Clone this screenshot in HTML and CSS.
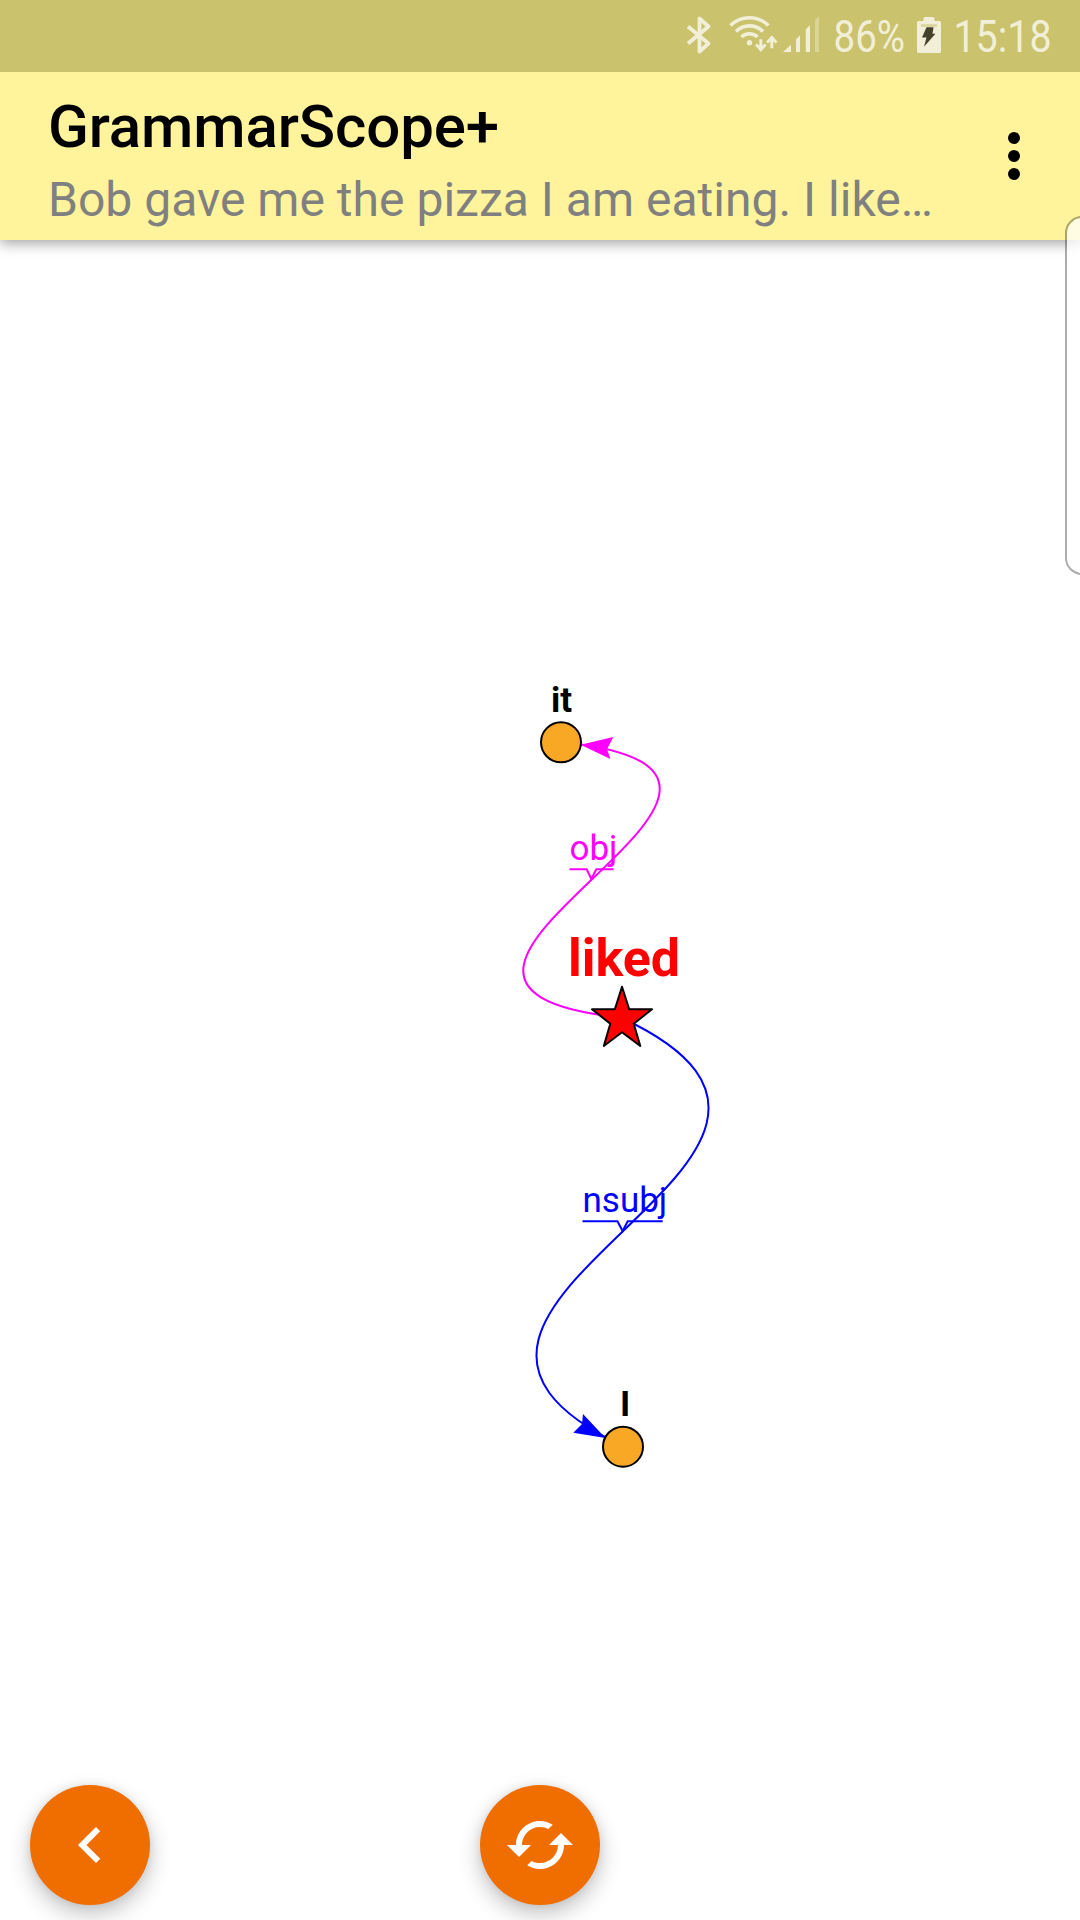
FILE: index.html
```html
<!DOCTYPE html>
<html lang="en">
<head>
<meta charset="utf-8">
<title>GrammarScope+</title>
<link rel="stylesheet" href="styles.css">
</head>
<body>
<div class="screen">
  <div class="status-bar">
    <svg class="status-icon" width="40" height="72" viewBox="680 0 40 72">
      <path class="line" d="M688 26.500 L708.500 43.500 L699.500 51.500 V18.500 L708.500 26.500 L688 43.500" stroke-width="3.800"/>
    </svg>
    <svg class="status-icon" width="60" height="72" viewBox="720 0 60 72">
      <g class="line" stroke-width="3.600">
        <path d="M730.500 25.500 A27 27 0 0 1 768.500 25.500"/>
        <path d="M736 31.500 A19 19 0 0 1 763 31.500"/>
        <path d="M741.500 37 A11.500 11.500 0 0 1 757.500 37"/>
      </g>
      <circle cx="749.500" cy="42.700" r="2.700"/>
      <path d="M759.300 39.300h3v6.500l2.400-2.400 1.900 1.900-5.800 6.800-5.800-6.800 1.900-1.900 2.400 2.400zM770.300 48.200h3v-7l2.300 2.400 1.900-1.900-5.700-6.400-5.700 6.400 1.900 1.900 2.300-2.400z"/>
    </svg>
    <svg class="status-icon" width="45" height="72" viewBox="780 0 45 72">
      <path d="M783 52l8-7.300V52zM796 52V39.300l4-3.700V52zM805.800 52V29.300l4.200-4V52z"/>
      <path class="faint" d="M815 52V20l4-4v36z"/>
    </svg>
    <svg class="status-icon" width="85" height="72" viewBox="825 0 85 72">
      <text class="status-text" x="833.500" y="52" textLength="71.500" lengthAdjust="spacingAndGlyphs">86%</text>
    </svg>
    <svg class="status-icon" width="40" height="72" viewBox="910 0 40 72">
      <path d="M923.500 21v-2.500q0-1.500 1.500-1.500h8q1.500 0 1.500 1.500V21h5q1.500 0 1.500 1.500v29q0 1.500-1.500 1.500h-21q-1.500 0-1.500-1.500v-29q0-1.500 1.500-1.500z"/>
      <path class="battery-level" d="M921 24.300h16v2.500h-16z"/>
      <path class="bolt" d="M926.500 27.300h7l-1 6.500h3l-11.500 13 2.500-9.300H922z"/>
    </svg>
    <svg class="status-icon" width="130" height="72" viewBox="950 0 130 72">
      <text class="status-text" x="953.500" y="52" textLength="98" lengthAdjust="spacingAndGlyphs">15:18</text>
    </svg>
  </div>

  <header class="app-bar">
    <div class="titles">
      <h1 class="title">GrammarScope+</h1>
      <p class="subtitle">Bob gave me the pizza I am eating. I like…</p>
    </div>
    <div class="overflow">
      <span class="dot"></span><span class="dot"></span><span class="dot"></span>
    </div>
  </header>

  <main class="content">
    <svg class="graph" width="1080" height="1680" viewBox="0 240 1080 1680">
      <g class="edge obj">
        <path d="M622 1017.500 C306.500 985.500 876.500 774 561 742"/>
        <path d="M569.500 869.300H586.700L591.300 879L596.300 869.300H613.500"/>
        <path class="head" d="M580.500 744.700L613.300 737L607 749.300L610.500 759z"/>
        <text x="569.500" y="859.500">obj</text>
      </g>
      <g class="edge nsubj">
        <path d="M622 1018 C921.500 1158.500 323.500 1304.500 623 1446"/>
        <path d="M582.500 1221.300H617.500L622.600 1231L627.700 1221.300H662.700"/>
        <path class="head" d="M605.500 1438L583 1414L582 1424L573.300 1432.700z"/>
        <text x="582.500" y="1212.300">nsubj</text>
      </g>
      <circle class="node" cx="561" cy="742.300" r="20"/>
      <circle class="node" cx="623" cy="1446.700" r="20"/>
      <path class="star" d="M622 986.700L629.200 1009.300H652L633.700 1023.700L640.300 1046L622 1032.300L603.800 1046L610.300 1023.700L592 1009.300H614.900z"/>
      <text class="word" x="561.500" y="712">it</text>
      <text class="word" x="625" y="1415.700">I</text>
      <text class="word root" x="624" y="976">liked</text>
    </svg>

    <button class="fab back" aria-label="Back">
      <svg width="72" height="72" viewBox="0 0 24 24"><path d="M15.410 7.410L14 6l-6 6 6 6 1.410-1.410L10.830 12z"/></svg>
    </button>
    <button class="fab reload" aria-label="Reload">
      <svg width="72" height="72" viewBox="0 0 24 24"><path d="M19 8l-4 4h3c0 3.310-2.690 6-6 6-1.010 0-1.970-.25-2.800-.7l-1.460 1.460C8.970 19.540 10.430 20 12 20c4.420 0 8-3.580 8-8h3l-4-4zM6 12c0-3.310 2.690-6 6-6 1.010 0 1.970.25 2.800.7l1.460-1.460C15.030 4.460 13.570 4 12 4c-4.420 0-8 3.580-8 8H1l4 4 4-4H6z"/></svg>
    </button>
  </main>

  <div class="edge-handle"></div>
</div>
</body>
</html>
```
FILE: styles.css
```css
* {
  box-sizing: border-box;
}

body {
  margin: 0;
  font-family: Roboto, sans-serif;
}

.screen {
  position: relative;
  display: flex;
  flex-direction: column;
  width: 1080px;
  height: 1920px;
  overflow: hidden;
  background: #fff;
}

.status-bar {
  position: relative;
  z-index: 2;
  display: flex;
  justify-content: flex-end;
  height: 72px;
  background: #cac26c;
}

.status-icon {
  display: block;
  overflow: visible;
  fill: #f2efd9;
}

.line {
  fill: none;
  stroke: #f2efd9;
  stroke-linejoin: round;
}

.faint {
  opacity: 0.4;
}

.battery-level {
  fill: #d9d395;
}

.bolt {
  fill: #45422a;
}

.status-text {
  font-size: 45px;
}

.app-bar {
  position: relative;
  z-index: 1;
  display: flex;
  justify-content: space-between;
  height: 168px;
  padding: 20px 60px 0 48px;
  background: #fff49b;
  box-shadow: 0 4px 12px rgba(0, 0, 0, 0.34);
}

.title,
.subtitle {
  margin: 0;
  white-space: nowrap;
}

.title {
  font-size: 60px;
  font-weight: 500;
  line-height: 70px;
  letter-spacing: -0.1px;
  color: #000;
}

.subtitle {
  margin-top: 10px;
  font-size: 48px;
  line-height: 56px;
  letter-spacing: 0.02px;
  color: #808080;
}

.overflow {
  display: flex;
  flex-direction: column;
  gap: 6px;
  padding-top: 40px;
}

.dot {
  width: 12px;
  height: 12px;
  border-radius: 50%;
  background: #000;
}

.content {
  position: relative;
  flex: 1;
}

.graph {
  display: block;
}

.edge path {
  fill: none;
  stroke-width: 2;
}

.edge text {
  font-size: 35px;
}

.obj path {
  stroke: #f0f;
}

.obj .head,
.obj text {
  fill: #f0f;
}

.nsubj path {
  stroke: #00f;
}

.nsubj .head,
.nsubj text {
  fill: #00f;
}

.edge .head {
  stroke: none;
}

.node {
  fill: #f9a825;
  stroke: #000;
  stroke-width: 2;
}

.star {
  fill: #f00;
  stroke: #000;
  stroke-width: 2;
  stroke-linejoin: round;
}

.word {
  font-size: 35px;
  font-weight: 700;
  text-anchor: middle;
}

.root {
  font-size: 52px;
  fill: #f00;
}

.fab {
  position: absolute;
  bottom: 15px;
  display: flex;
  align-items: center;
  justify-content: center;
  width: 120px;
  height: 120px;
  padding: 0;
  border: 0;
  border-radius: 50%;
  background: #f06d00;
  box-shadow: 0 9px 22px rgba(0, 0, 0, 0.24), 0 0 8px rgba(0, 0, 0, 0.08);
}

.fab svg {
  fill: #fff;
}

.back {
  left: 30px;
}

.reload {
  left: 480px;
}

.edge-handle {
  position: absolute;
  z-index: 3;
  top: 216px;
  right: -20px;
  width: 35px;
  height: 359px;
  border: 2px solid rgba(0, 0, 0, 0.32);
  border-radius: 17px;
  background: rgba(255, 255, 255, 0.72);
  background-clip: padding-box;
}
```
